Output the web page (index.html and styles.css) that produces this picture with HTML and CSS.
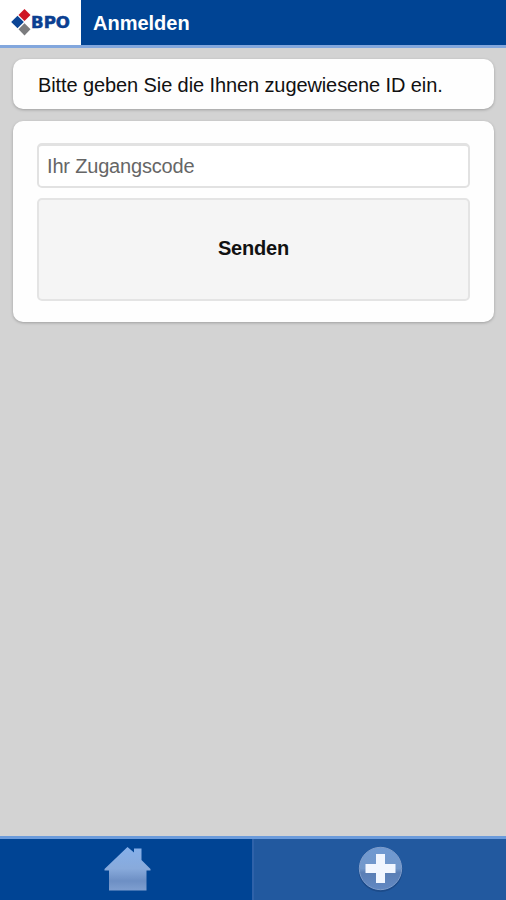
FILE: index.html
```
<!DOCTYPE html>
<html lang="de">
<head>
    <meta charset="UTF-8">
    <meta name="viewport" content="width=device-width, initial-scale=1.0">
    <title>Anmelden</title>
    <link rel="stylesheet" href="styles.css">
</head>
<body>
    <header class="header">
        <a class="logo" href="#">
            <svg width="81" height="45" viewBox="0 0 81 45">
                <path d="M24.5 9 L30.5 15 L24.5 21 L18.5 15 Z" fill="#cf1525" />
                <path d="M17.5 15.8 L23.8 22 L17.5 28.2 L11.2 22 Z" fill="#0b4595" />
                <path d="M24.5 23.3 L30.5 29.3 L24.5 35.6 L18.5 29.3 Z" fill="#7b7c7e" />
                <text class="logo-text" x="31" y="28.3" textLength="39" lengthAdjust="spacingAndGlyphs">BPO</text>
            </svg>
        </a>
        <h1 class="title">Anmelden</h1>
    </header>

    <main class="content">
        <div class="box">
            <p class="message">Bitte geben Sie die Ihnen zugewiesene ID ein.</p>
        </div>
        <form class="box login">
            <input class="code" type="text" placeholder="Ihr Zugangscode">
            <button class="send" type="button">Senden</button>
        </form>
    </main>

    <nav class="tabs">
        <a class="tab" href="#">
            <svg width="50" height="48" viewBox="0 0 50 48">
                <defs>
                    <linearGradient id="house" x1="0" y1="0" x2="0" y2="1">
                        <stop offset="0" stop-color="#86b0ea" />
                        <stop offset="0.5" stop-color="#88aadb" />
                        <stop offset="0.78" stop-color="#6d8fc4" />
                        <stop offset="1" stop-color="#7f9fd0" />
                    </linearGradient>
                </defs>
                <path d="M26.5 2 L33 7.5 V3.5 H40.5 V15 L49.5 24 V25.5 H45.5 V45.5 H8 V25.5 H3.5 V24 Z" fill="url(#house)" />
            </svg>
        </a>
        <a class="tab active" href="#">
            <svg width="48" height="48" viewBox="0 0 48 48">
                <defs>
                    <linearGradient id="disc" x1="0" y1="0" x2="0" y2="1">
                        <stop offset="0" stop-color="#6f99d2" />
                        <stop offset="0.5" stop-color="#7398ca" />
                        <stop offset="0.6" stop-color="#5a7eb5" />
                        <stop offset="1" stop-color="#6289c3" />
                    </linearGradient>
                </defs>
                <circle class="disc-shadow" cx="24.5" cy="25" r="22" />
                <circle cx="24.5" cy="23.5" r="21.2" fill="url(#disc)" stroke="#7f9dcb" />
                <path d="M20 9 H29 V19 H39.5 V28 H29 V38 H20 V28 H9.5 V19 H20 Z" fill="#f1f6ff" />
            </svg>
        </a>
    </nav>
</body>
</html>
```

FILE: styles.css
```
* {
    box-sizing: border-box;
}

body {
    display: flex;
    flex-direction: column;
    height: 100vh;
    margin: 0;
    background-color: #d3d3d3;
    color: #111;
    font-family: "Liberation Sans", Arial, sans-serif;
    font-size: 20px;
}

.header {
    display: flex;
    height: 48px;
    background-color: #004494;
    border-bottom: 3px solid #82a7dd;
}

.logo {
    width: 81px;
    background-color: #fff;
}

.logo svg {
    display: block;
}

.logo-text {
    font-family: "DejaVu Sans", sans-serif;
    font-size: 15.5px;
    font-weight: bold;
    fill: #0b3f91;
    stroke: #0b3f91;
    stroke-width: 0.5px;
}

.title {
    margin: 0;
    padding-left: 12px;
    color: #fff;
    font-size: 20px;
    line-height: 46px;
}

.content {
    flex: 1;
    padding: 11px 12px 0 13px;
}

.box {
    margin-bottom: 12px;
    padding: 0 25px;
    background-color: #fefefe;
    border-radius: 10px;
    box-shadow: 0 1px 3px rgba(0, 0, 0, 0.25);
}

.message {
    height: 50px;
    margin: 0;
    letter-spacing: -0.1px;
    line-height: 52px;
    white-space: nowrap;
}

.login {
    display: flex;
    flex-direction: column;
    gap: 10px;
    height: 201px;
    padding: 22px 24px 21px;
}

.code {
    width: 100%;
    height: 45px;
    padding: 0 8px;
    background-color: #fff;
    border: 2px solid #e2e2e2;
    border-top-width: 3px;
    border-radius: 5px;
    font: inherit;
    letter-spacing: -0.18px;
}

.code::placeholder {
    color: #666;
}

.send {
    height: 103px;
    padding: 0 0 3px;
    background-color: #f5f5f5;
    border: 2px solid #e4e4e4;
    border-radius: 5px;
    color: #111;
    font: inherit;
    font-weight: bold;
    letter-spacing: -0.2px;
}

.tabs {
    display: flex;
    height: 64px;
    border-top: 3px solid #6b9bdb;
}

.tab {
    display: flex;
    flex: 1;
    justify-content: center;
    padding-top: 6px;
    background-color: #004494;
}

.active {
    background-color: #22599f;
    border-left: 2px solid #2f62a9;
}

.disc-shadow {
    fill: #1c4b8a;
}
```
